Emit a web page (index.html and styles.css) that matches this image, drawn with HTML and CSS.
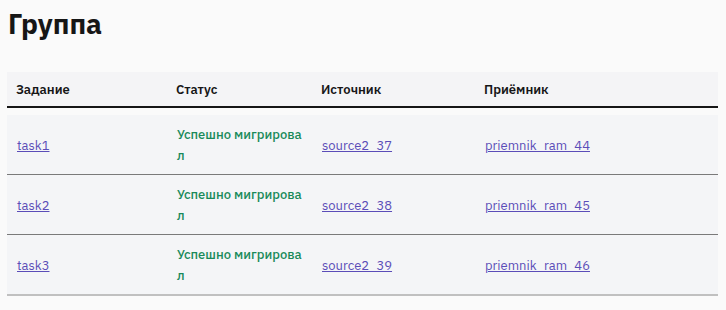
FILE: index.html
```html
<!DOCTYPE html>
<html lang="ru">
<head>
<meta charset="utf-8">
<title>Группа</title>
<link rel="stylesheet" href="styles.css">
</head>
<body>
<main class="page">
  <h1 class="title">Группа</h1>
  <table class="grid">
    <colgroup>
      <col class="c1"><col class="c2"><col class="c3"><col class="c4">
    </colgroup>
    <thead>
      <tr class="head-row">
        <th>Задание</th>
        <th>Статус</th>
        <th>Источник</th>
        <th>Приёмник</th>
      </tr>
    </thead>
    <tbody>
      <tr class="spacer"><td colspan="4"></td></tr>
      <tr class="row">
        <td><a href="#" class="link">task1</a></td>
        <td><span class="status">Успешно мигрировал</span></td>
        <td><a href="#" class="link">source2_37</a></td>
        <td><a href="#" class="link">priemnik_ram_44</a></td>
      </tr>
      <tr class="row">
        <td><a href="#" class="link">task2</a></td>
        <td><span class="status">Успешно мигрировал</span></td>
        <td><a href="#" class="link">source2_38</a></td>
        <td><a href="#" class="link">priemnik_ram_45</a></td>
      </tr>
      <tr class="row last">
        <td><a href="#" class="link">task3</a></td>
        <td><span class="status">Успешно мигрировал</span></td>
        <td><a href="#" class="link">source2_39</a></td>
        <td><a href="#" class="link">priemnik_ram_46</a></td>
      </tr>
    </tbody>
  </table>
</main>
</body>
</html>
```

FILE: styles.css
```css
html, body {
  margin: 0;
  background: #fafafa;
}
body {
  font-family: "IBM Plex Sans", "Noto Sans", "Liberation Sans", sans-serif;
  color: #161616;
}
.page {
  padding: 4px 8px 0 7px;
}
.title {
  margin: 0 0 0 1px;
  font-size: 28px;
  line-height: 40px;
  font-weight: 700;
  color: #161616;
}
.grid {
  margin-top: 28px;
  width: 711px;
  border-collapse: collapse;
  table-layout: fixed;
  font-size: 13px;
}
.c1 { width: 160px; }
.c2 { width: 145px; }
.c3 { width: 163px; }
.c4 { width: 243px; }
.head-row {
  background: #f4f4f6;
  border-bottom: 2px solid #161616;
}
.head-row th {
  height: 34px;
  padding: 0 9px;
  text-align: left;
  font-weight: 600;
  font-size: 13px;
  vertical-align: middle;
}
.spacer td {
  height: 7px;
  padding: 0;
}
.row {
  background: #f4f5f7;
  border-bottom: 1px solid #7a7a7a;
}
.row.last {
  border-bottom: 2px solid #c0c0c0;
}
.row td {
  height: 57px;
  padding: 2px 9px 0 10px;
  vertical-align: middle;
}
.link {
  color: #5b4db8;
  text-decoration: underline;
}
.status {
  display: block;
  margin-top: -2px;
  width: 130px;
  word-break: break-all;
  color: #198a5a;
  font-weight: 500;
  line-height: 21px;
}
```
